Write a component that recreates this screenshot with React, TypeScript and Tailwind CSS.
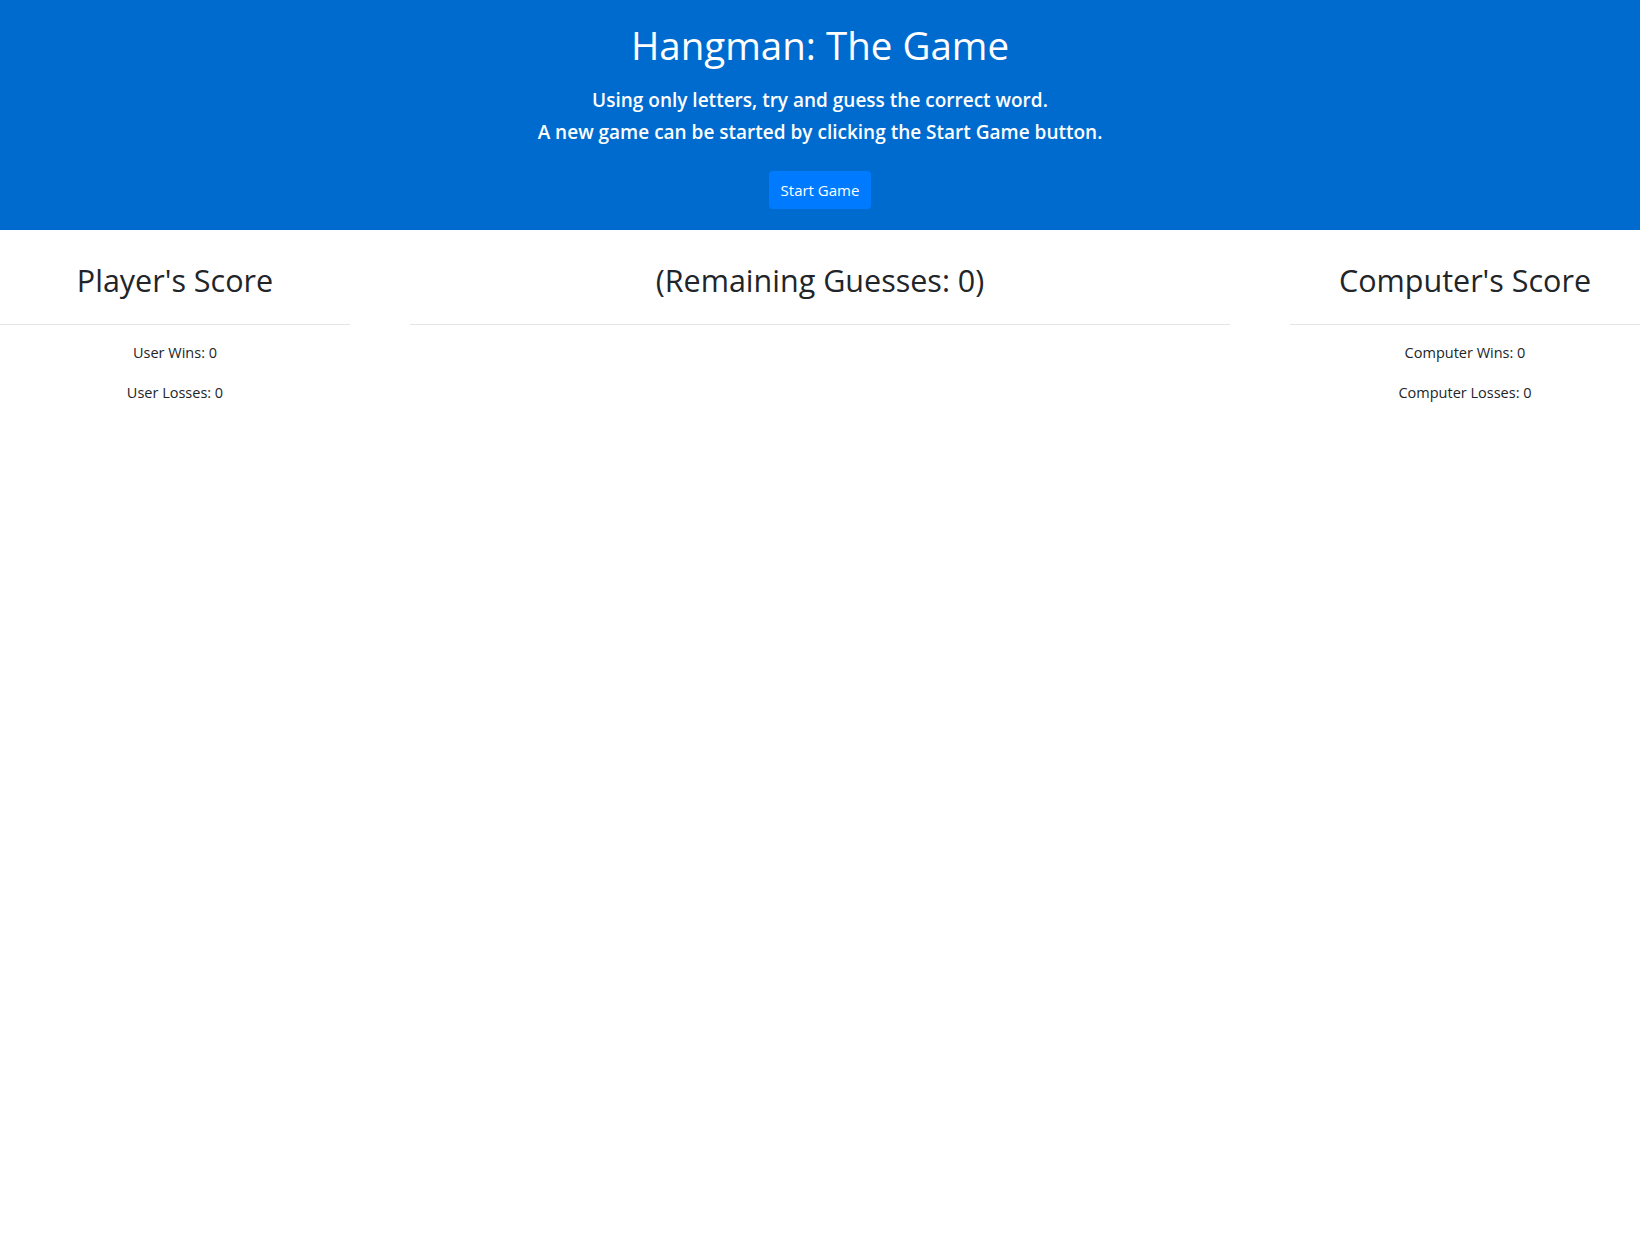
const FONT = "font-['Open_Sans','Noto_Sans',sans-serif]";

function ScoreColumn({ title, lines }: { title: string; lines: string[] }) {
  return (
    <div className="flex flex-col items-center">
      <h2 className="text-[30.5px] leading-[38px] font-medium text-[#212529] pt-[31px] pb-[25px]">{title}</h2>
      <hr className="w-full border-0 border-t border-[#e5e5e5] mb-4" />
      {lines.map((l) => (
        <p key={l} className="text-[14.5px] leading-6 text-[#212529] mb-4">
          {l}
        </p>
      ))}
    </div>
  );
}

export default function App() {
  return (
    <div className={`${FONT} min-h-screen bg-white`}>
      <header className="bg-[#006bcf] text-white flex flex-col items-center pt-[21px] pb-[21px] h-[230px]">
        <h1 className="text-[38.5px] leading-[48px] font-medium">Hangman: The Game</h1>
        <div className="mt-[15px] text-center text-[19px] leading-[32px] font-semibold">
          <p>Using only letters, try and guess the correct word.</p>
          <p>A new game can be started by clicking the Start Game button.</p>
        </div>
        <button className="mt-[23px] h-[38px] px-3 rounded bg-[#007bff] text-[15px] text-white">
          Start Game
        </button>
      </header>

      <main className="grid grid-cols-[350px_820px_350px] gap-x-[60px]">
        <ScoreColumn title="Player's Score" lines={["User Wins: 0", "User Losses: 0"]} />
        <ScoreColumn title="(Remaining Guesses: 0)" lines={[]} />
        <ScoreColumn title="Computer's Score" lines={["Computer Wins: 0", "Computer Losses: 0"]} />
      </main>
    </div>
  );
}
